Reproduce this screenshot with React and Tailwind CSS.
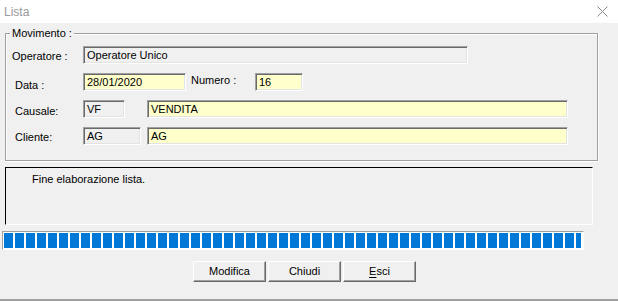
import React from 'react';

const font = { fontFamily: '"Liberation Sans", Arial, sans-serif' };

// sunken edit field (classic 3D look)
function Field({ w, value, yellow }) {
  return (
    <div
      className={`h-[18px] border border-t-[#a0a0a0] border-l-[#a0a0a0] border-b-white border-r-white shadow-[inset_1px_1px_0_#696969,inset_-1px_-1px_0_#e3e3e3] flex items-center pl-[3px] text-[11px] leading-[13px] text-black ${yellow ? 'bg-[#ffffcc]' : 'bg-[#f0f0f0]'} ${w}`}
    >
      {value}
    </div>
  );
}

function Button({ children }) {
  return (
    <button className="w-[73px] h-[21px] bg-[#f0f0f0] border border-t-white border-l-white border-b-[#696969] border-r-[#696969] shadow-[inset_-1px_-1px_0_#a0a0a0] text-[11px] leading-[13px] text-black flex items-center justify-center">
      {children}
    </button>
  );
}

export default function App() {
  const blocks = Array.from({ length: 52 });

  return (
    <div className="w-[618px] h-[301px] bg-[#f0f0f0] overflow-hidden flex flex-col text-[11px] leading-[13px]" style={font}>
      {/* title bar */}
      <div className="h-[23px] bg-white flex items-center justify-between shrink-0">
        <span className="pl-[4px] pt-[2px] text-[12px] text-[#999999]">Lista</span>
        <svg width="11" height="11" viewBox="0 0 11 11" className="mr-[10px] mt-[-1px]">
          <path d="M0.5 0.5 L10.5 10.5 M10.5 0.5 L0.5 10.5" stroke="#8a8a8a" strokeWidth="1" />
        </svg>
      </div>

      {/* groupbox */}
      <div className="relative ml-[5px] mt-[10px] w-[593px] h-[128px] shrink-0 border border-[#a0a0a0] shadow-[inset_1px_1px_0_#fff,1px_1px_0_#fff] pt-[12px] flex flex-col gap-[9px]">
        <span className="absolute -top-[7px] left-[4px] bg-[#f0f0f0] px-[2px] text-black">Movimento :</span>

        <div className="flex items-start h-[18px]">
          <span className="w-[77px] pl-[6px] mt-[4px] shrink-0">Operatore :</span>
          <Field w="w-[385px]" value="Operatore Unico" />
        </div>

        <div className="flex items-start h-[18px]">
          <span className="w-[77px] pl-[9px] mt-[6px] shrink-0">Data :</span>
          <Field w="w-[103px]" value="28/01/2020" yellow />
          <span className="w-[69px] pl-[5px] mt-[1px] shrink-0">Numero :</span>
          <Field w="w-[48px]" value="16" yellow />
        </div>

        <div className="flex items-start h-[18px]">
          <span className="w-[77px] pl-[9px] mt-[5px] shrink-0">Causale:</span>
          <Field w="w-[42px]" value="VF" />
          <div className="w-[22px] shrink-0" />
          <Field w="w-[421px]" value="VENDITA" yellow />
        </div>

        <div className="flex items-start h-[18px]">
          <span className="w-[77px] pl-[9px] mt-[4px] shrink-0">Cliente:</span>
          <Field w="w-[58px]" value="AG" />
          <div className="w-[6px] shrink-0" />
          <Field w="w-[421px]" value="AG" yellow />
        </div>
      </div>

      {/* message box */}
      <div className="ml-[5px] mt-[6px] w-[588px] h-[58px] shrink-0 border border-t-black border-l-black border-b-white border-r-white flex items-start">
        <span className="ml-[26px] mt-[5px]">Fine elaborazione lista.</span>
      </div>

      {/* progress bar */}
      <div className="ml-[2px] mt-[6px] w-[582px] h-[19px] shrink-0 border border-t-[#a0a0a0] border-l-[#a0a0a0] border-b-white border-r-white bg-white p-[1px] flex gap-[2px]">
        {blocks.map((_, i) => (
          <div key={i} className="w-[9px] h-full bg-[#0078d7] shrink-0" />
        ))}
        <div className="w-[5px] h-full bg-[#0078d7] shrink-0" />
      </div>

      {/* buttons */}
      <div className="flex gap-[2px] pl-[193px] mt-[11px] shrink-0">
        <Button>Modifica</Button>
        <Button>Chiudi</Button>
        <Button>
          <span className="underline underline-offset-2">E</span>sci
        </Button>
      </div>

      <div className="mt-auto h-[2px] bg-[#a0a0a0] shrink-0" />
    </div>
  );
}
